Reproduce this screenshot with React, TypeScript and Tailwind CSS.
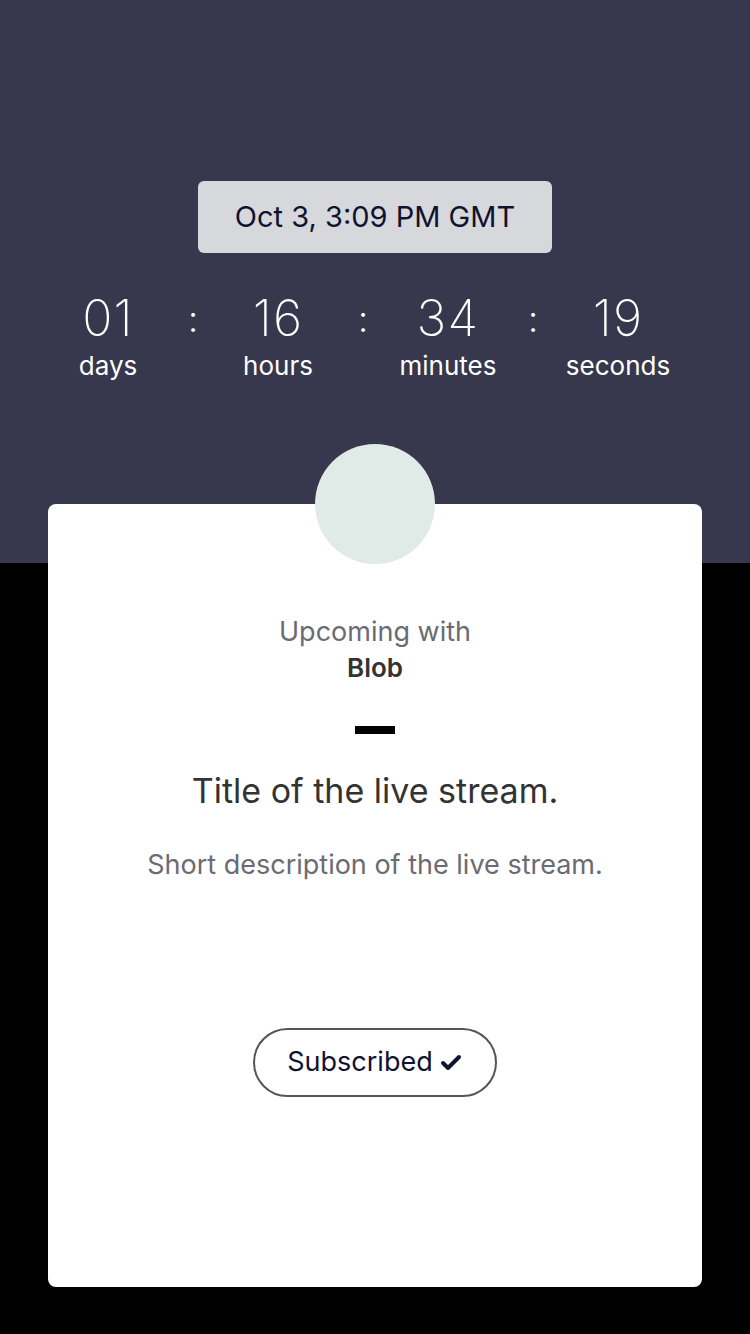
import { Check } from 'lucide-react';

const units = [
  { value: '01', label: 'days' },
  { value: '16', label: 'hours' },
  { value: '34', label: 'minutes' },
  { value: '19', label: 'seconds' },
];

export default function App() {
  return (
    <div className="min-h-[1334px] bg-black font-['Inter',sans-serif]">
      <section className="h-[563px] bg-[#37384d] pt-[181px]">
        <div className="mx-auto flex h-[72px] w-[354px] items-center justify-center rounded-md bg-[#d7d8dc] text-[29px] text-[#0f1230]">
          Oct 3, 3:09 PM GMT
        </div>
        <div className="mt-[40px] flex pl-[23px] text-white">
          {units.map((u, i) => (
            <div key={u.label} className="flex">
              {i > 0 && <div className="-mx-[10px] w-[20px] pt-[8px] text-center text-[36px] font-light leading-none">:</div>}
              <div className="flex w-[170px] flex-col items-center">
                <span className="text-[50px] font-extralight leading-none tracking-wide">{u.value}</span>
                <span className="mt-[10px] text-[26px] leading-none">{u.label}</span>
              </div>
            </div>
          ))}
        </div>
      </section>

      <div className="mx-[48px] -mt-[59px] flex h-[783px] flex-col items-center rounded-lg bg-white">
        <div className="-mt-[60px] h-[120px] w-[120px] rounded-full bg-[#e0ebe8]" />
        <p className="mt-[50px] text-[27px] leading-[36px] text-[#6b6b73]">Upcoming with</p>
        <p className="text-[26px] font-semibold leading-[36px] text-[#333]">Blob</p>
        <div className="mt-[40px] h-[8px] w-[40px] bg-black" />
        <h1 className="mt-[35px] text-[34px] leading-[44px] text-[#333]">Title of the live stream.</h1>
        <p className="mt-[34px] text-[27px] leading-[36px] text-[#6b6b73]">Short description of the live stream.</p>
        <button className="mt-[145px] flex h-[69px] w-[244px] items-center justify-center gap-[6px] rounded-full border-2 border-[#555] text-[27px] text-[#0f1230]">
          Subscribed
          <Check size={24} strokeWidth={4} />
        </button>
      </div>
    </div>
  );
}
